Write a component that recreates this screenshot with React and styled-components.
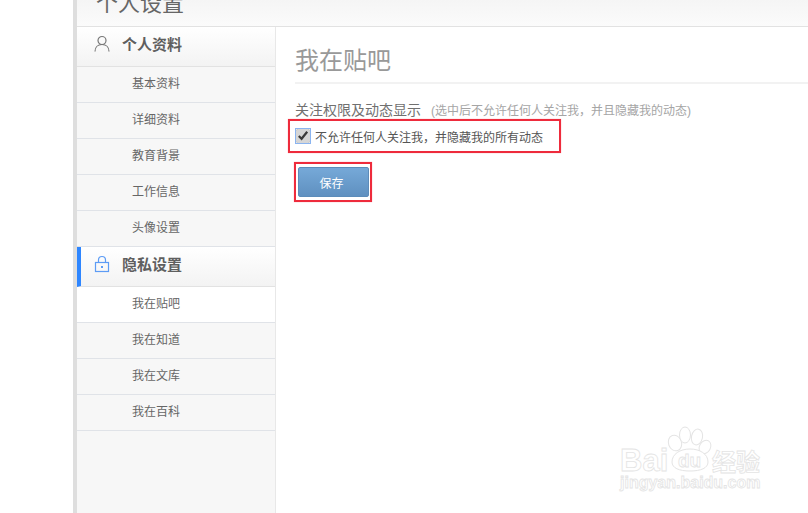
import styled, { createGlobalStyle } from "styled-components"

const GlobalStyle = createGlobalStyle`
    html, body {
        margin: 0;
        padding: 0;
        height: 100%;
        overflow: hidden;
        background: #fff;
        font-family: "Liberation Sans", "Noto Sans CJK SC", sans-serif;
    }
`

const Page = styled.div`
    position: relative;
    display: flex;
    width: 808px;
    height: 513px;
    overflow: hidden;
    background: #fff;
`

const Shell = styled.div`
    display: flex;
    flex-direction: column;
    flex: 1;
    margin-left: 73px;
    border-left: 4px solid #dedede;
`

const Header = styled.div`
    flex: none;
    height: 26px;
    padding-left: 19px;
    background: linear-gradient(#f5f5f5, #fbfbfb);
    border-bottom: 1px solid #e2e2e2;
    overflow: hidden;
`

const HeaderTitle = styled.div`
    margin-top: -8px;
    font-size: 22px;
    line-height: 24px;
    color: #666;
`

const Body = styled.div`
    display: flex;
    flex: 1;
`

const Sidebar = styled.div`
    flex: none;
    width: 198px;
    background: #f7f7f7;
    border-right: 1px solid #e8e8e8;
`

const SectionHead = styled.div`
    display: flex;
    align-items: center;
    box-sizing: border-box;
    height: 40px;
    padding-left: ${props => props.$active ? '13px' : '17px'};
    padding-bottom: 6px;
    background: linear-gradient(#fff, #f3f3f3);
    border-bottom: 1px solid #e2e2e2;
    border-left: ${props => props.$active ? '4px solid #2e86ff' : 'none'};
`

const SectionIcon = styled.svg`
    flex: none;
    width: 16px;
    height: 18px;
    margin-right: 12px;
    fill: none;
    stroke: ${props => props.$color};
    stroke-width: 1.2;
`

const SectionTitle = styled.span`
    font-size: 15px;
    font-weight: 700;
    color: #5f5f5f;
`

const Item = styled.div`
    box-sizing: border-box;
    height: 36px;
    padding-left: 55px;
    font-size: 12px;
    line-height: 35px;
    color: #666;
    background: ${props => props.$active ? '#fff' : '#f7f7f7'};
    border-bottom: 1px solid #e0e3e8;
`

const Content = styled.div`
    flex: 1;
    padding: 18px 0 0 19px;
    background: #fff;
`

const PageTitle = styled.div`
    height: 37px;
    font-size: 24px;
    line-height: 32px;
    color: #999;
    border-bottom: 2px solid #f2f2f2;
`

const FieldLabel = styled.div`
    display: flex;
    align-items: baseline;
    margin-top: 16px;
    font-size: 14px;
    line-height: 20px;
    color: #707070;
`

const Hint = styled.span`
    margin-left: 10px;
    font-size: 12px;
    color: #a5a5a5;
`

const Mark = styled.div`
    display: flex;
    align-items: center;
    box-sizing: border-box;
    border: 2px solid #ee2b3c;
    box-shadow: 0 0 1px #f59aa3;
`

const CheckMark = styled(Mark)`
    width: 273px;
    height: 34px;
    margin: -2px 0 0 -7px;
    padding-left: 6px;
`

const ButtonMark = styled(Mark)`
    justify-content: center;
    width: 78px;
    height: 40px;
    margin: 9px 0 0 -1px;
`

const CheckBox = styled.input`
    flex: none;
    width: 14px;
    height: 14px;
    margin: 0 5px 0 0;
    accent-color: #d6d6d6;
    box-shadow: 0 0 0 1px #8ab4f0;
    border-radius: 2px;
`

const CheckText = styled.label`
    font-size: 12px;
    color: #555;
    white-space: nowrap;
`

const SaveButton = styled.button`
    width: 71px;
    height: 30px;
    padding: 0 3px 0 0;
    font-family: inherit;
    font-size: 12px;
    color: #fff;
    background: linear-gradient(#76a9d8, #5f90c0);
    border: 1px solid #5c8cba;
    border-radius: 2px;
`

const Watermark = styled.svg`
    position: absolute;
    right: 40px;
    bottom: 16px;
    width: 150px;
    height: 80px;
    font-family: "Liberation Sans", "Noto Sans CJK SC", sans-serif;
`

const MarkText = styled.text`
    fill: #fff;
    stroke: #e4e4e4;
    stroke-width: 0.8;
    font-size: ${props => props.$size}px;
    font-weight: 700;
`

const Blob = styled.ellipse`
    fill: #fff;
    stroke: #e4e4e4;
    stroke-width: 1;
`

const accountItems = ["基本资料", "详细资料", "教育背景", "工作信息", "头像设置"]
const privacyItems = ["我在贴吧", "我在知道", "我在文库", "我在百科"]

const App = () => {
    return (
        <Page>
            <GlobalStyle />
            <Shell>
                <Header>
                    <HeaderTitle>个人设置</HeaderTitle>
                </Header>
                <Body>
                    <Sidebar>
                        <SectionHead>
                            <SectionIcon viewBox="0 0 16 18" $color="#777">
                                <circle cx="8" cy="5.5" r="4" />
                                <path d="M1 16.5c0-4.5 3-7 7-7s7 2.5 7 7" />
                            </SectionIcon>
                            <SectionTitle>个人资料</SectionTitle>
                        </SectionHead>
                        {accountItems.map(name => <Item key={name}>{name}</Item>)}
                        <SectionHead $active>
                            <SectionIcon viewBox="0 0 16 18" $color="#5d9cf5">
                                <rect x="1.5" y="7.5" width="13" height="9" />
                                <path d="M4.5 7.5V5a3.5 3.5 0 0 1 7 0v2.5" />
                                <path d="M8 11v2" strokeWidth="2" />
                            </SectionIcon>
                            <SectionTitle>隐私设置</SectionTitle>
                        </SectionHead>
                        {privacyItems.map((name, i) => <Item key={name} $active={i === 0}>{name}</Item>)}
                    </Sidebar>
                    <Content>
                        <PageTitle>我在贴吧</PageTitle>
                        <FieldLabel>
                            关注权限及动态显示
                            <Hint>(选中后不允许任何人关注我，并且隐藏我的动态)</Hint>
                        </FieldLabel>
                        <CheckMark>
                            <CheckBox type="checkbox" defaultChecked id="hide" />
                            <CheckText htmlFor="hide">不允许任何人关注我，并隐藏我的所有动态</CheckText>
                        </CheckMark>
                        <ButtonMark>
                            <SaveButton>保存</SaveButton>
                        </ButtonMark>
                    </Content>
                </Body>
            </Shell>
            <Watermark viewBox="0 0 150 80">
                <Blob cx="57" cy="26" rx="6.5" ry="8" transform="rotate(-20 57 26)" />
                <Blob cx="67" cy="18" rx="5.5" ry="8" />
                <Blob cx="79" cy="20" rx="5.5" ry="8" transform="rotate(12 79 20)" />
                <Blob cx="87" cy="30" rx="5.5" ry="7" transform="rotate(30 87 30)" />
                <path d="M54 45c0-8 8-13 18-13s18 5 18 13c0 6-7 9-18 9s-18-3-18-9z" fill="#fff" stroke="#e4e4e4" />
                <MarkText x="2" y="54" $size={31}>Bai</MarkText>
                <MarkText x="60" y="50" $size={19}>du</MarkText>
                <MarkText x="94" y="54" $size={24}>经验</MarkText>
                <MarkText x="2" y="71" $size={16}>jingyan.baidu.com</MarkText>
            </Watermark>
        </Page>
    )
}

export default App
